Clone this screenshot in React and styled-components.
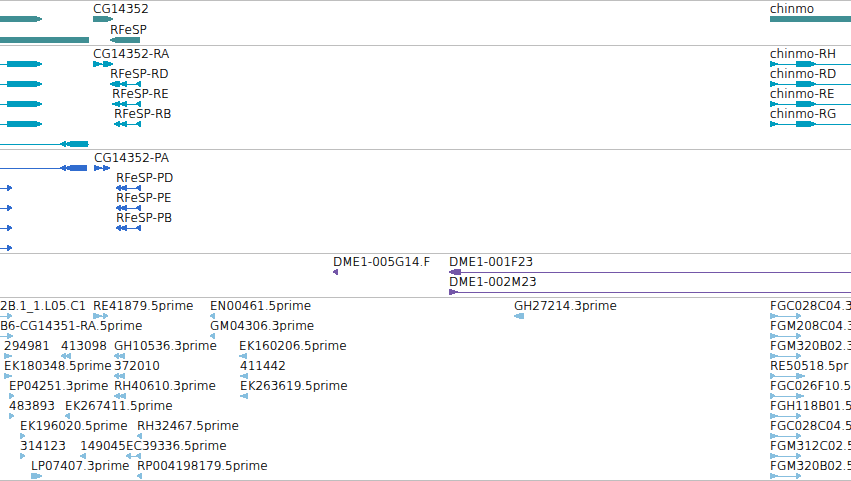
import React, { Component } from 'react'
import styled, { createGlobalStyle } from 'styled-components'


const FAR = 4000

const GlobalStyle = createGlobalStyle`
    body {
        background-color: #ffffff;
        margin: 0;
        overflow: hidden;
    }
`;

const Browser = styled.main`
    border-bottom: 1px solid #bebebe;
    color: #000000;
    display: flex;
    flex-direction: column;
    font-family: 'DejaVu Sans', sans-serif;
    font-size: 12px;
    font-weight: 200;
    line-height: 14px;
`;

const Track = styled.section`
    border-top: 1px solid #bebebe;
    color: ${props => props.$color};
    display: flex;
    flex-direction: column;
    gap: ${props => props.$gap || 0}px;
    padding: 1px 0 2px;

    &:last-child {
        padding-bottom: 1px;
    }
`;

const Lane = styled.div`
    height: 20px;
    overflow-x: clip;
    position: relative;
`;

// features sit on the lane at their place in the sequence
const FeatureBox = styled.div`
    display: flex;
    flex-direction: column;
    position: absolute;
    top: 0;
`;

const Label = styled.span`
    color: #000000;
    height: 14px;
    text-shadow: 0 0 0 #000000;
    white-space: nowrap;
`;

const Glyph = styled.svg`
    display: block;
    fill: currentColor;
    height: 6px;
    shape-rendering: crispEdges;
`;


// block: [start, end, strand], strand is 1, -1 or 0 for no arrow head
const blockPoints = ([start, end, strand], offset) => {
    const a = start - offset
    const b = end - offset
    const head = b - a > 9 ? 7 : b - a
    if (strand === 1) {
        return `${a},0 ${b - head + 1},0 ${b},2.4 ${b},3.6 ${b - head + 1},6 ${a},6`
    }
    if (strand === -1) {
        return `${b},0 ${a + head - 1},0 ${a},2.4 ${a},3.6 ${a + head - 1},6 ${b},6`
    }
    return `${a},0 ${b},0 ${b},6 ${a},6`
}

const Feature = ({ name, blocks, line }) => {
    const ends = blocks.concat(line ? [line] : [])
    const start = Math.min(...ends.map(e => e[0]))
    const width = Math.max(...ends.map(e => e[1])) - start
    return (
        <FeatureBox style={{ left: start }}>
            <Label>{name}</Label>
            <Glyph width={width} aria-hidden="true">
                {line && <rect x={line[0] - start} y="3" width={line[1] - line[0]} height="1" />}
                {blocks.map(block => (
                    <polygon key={block[0]} points={blockPoints(block, start)} />
                ))}
            </Glyph>
        </FeatureBox>
    )
}


const f = (name, blocks, line) => ({ name, blocks, line })

const leftExon = f('', [[7, 42, 1]], [0, 8])
const leftCds = f('', [[7, 12, 1]], [0, 8])
const rfesp = (name, start) => f(name, [[start, 120, -1], [119, 127, -1], [136, 141, -1]], [start, 141])
const rfespCds = name => f(name, [[116, 121, -1], [120, 127, -1], [136, 141, -1]], [116, 141])
const chinmo = name => f(name, [[770, 778, 1], [796, 816, 1]], [770, FAR])
const chinmoEst = (name, first = 778, last = 801) => f(name, [[770, first, 1], [796, last, 1]], [770, last])

const tracks = [
    {
        id: 'genes',
        color: '#408f94',
        gap: 1,
        lanes: [
            [f('', [[0, 42, 1]]), f('CG14352', [[93, 113, 1]]), f('chinmo', [[770, FAR, 0]])],
            [f('', [[0, 89, 0]]), f('RFeSP', [[110, 140, -1]])],
        ],
    },
    {
        id: 'transcripts',
        color: '#009dbf',
        lanes: [
            [leftExon, f('CG14352-RA', [[93, 102, 1], [103, 113, 1]], [93, 113]), chinmo('chinmo-RH')],
            [leftExon, rfesp('RFeSP-RD', 110), chinmo('chinmo-RD')],
            [leftExon, rfesp('RFeSP-RE', 112), chinmo('chinmo-RE')],
            [leftExon, rfesp('RFeSP-RB', 114), chinmo('chinmo-RG')],
            [f('', [[60, 66, -1], [65, 88, -1]], [0, 89])],
        ],
    },
    {
        id: 'proteins',
        color: '#306ccf',
        lanes: [
            [f('', [[60, 66, -1], [65, 87, -1]], [0, 87]), f('CG14352-PA', [[94, 102, 1], [103, 110, 1]], [94, 110])],
            [leftCds, rfespCds('RFeSP-PD')],
            [leftCds, rfespCds('RFeSP-PE')],
            [leftCds, rfespCds('RFeSP-PB')],
            [leftCds],
        ],
    },
    {
        id: 'clones',
        color: '#7457a8',
        lanes: [
            [f('DME1-005G14.F', [[333, 338, -1]]), f('DME1-001F23', [[449, 461, -1]], [449, FAR])],
            [f('DME1-002M23', [[449, 458, 1]], [449, FAR])],
        ],
    },
    {
        id: 'ests',
        color: '#87bfdf',
        lanes: [
            [
                f('2B.1_1.L05.C1', [[7, 12, 1]], [0, 8]),
                f('RE41879.5prime', [[93, 102, 1], [103, 108, 1]], [93, 108]),
                f('EN00461.5prime', [[210, 215, -1]]),
                f('GH27214.3prime', [[514, 524, -1]]),
                chinmoEst('FGC028C04.3'),
            ],
            [
                f('B6-CG14351-RA.5prime', [[7, 13, 1]], [0, 8]),
                f('GM04306.3prime', [[210, 215, -1]]),
                chinmoEst('FGM208C04.3'),
            ],
            [
                f('294981', [[4, 12, 1]]),
                f('413098', [[61, 66, -1], [65, 71, -1]]),
                f('GH10536.3prime', [[114, 119, -1], [118, 125, -1]]),
                f('EK160206.5prime', [[239, 247, -1]]),
                chinmoEst('FGM320B02.3'),
            ],
            [
                f('EK180348.5prime', [[4, 12, 1]]),
                f('372010', [[114, 119, -1], [118, 125, -1]]),
                f('411442', [[240, 248, -1]]),
                chinmoEst('RE50518.5pr', 775, 805),
            ],
            [
                f('EP04251.3prime', [[9, 14, 1]]),
                f('RH40610.3prime', [[114, 120, -1], [119, 126, -1]]),
                f('EK263619.5prime', [[240, 248, -1]]),
                chinmoEst('FGC026F10.5', 775, 804),
            ],
            [
                f('483893', [[9, 14, 1]]),
                f('EK267411.5prime', [[65, 70, -1]]),
                chinmoEst('FGH118B01.5'),
            ],
            [
                f('EK196020.5prime', [[20, 25, 1]]),
                f('RH32467.5prime', [[137, 142, -1]]),
                chinmoEst('FGC028C04.5'),
            ],
            [
                f('314123', [[20, 25, 1]]),
                f('149045', [[80, 86, -1]]),
                f('EC39336.5prime', [[126, 131, -1], [136, 141, -1]], [126, 141]),
                chinmoEst('FGM312C02.5'),
            ],
            [
                f('LP07407.3prime', [[31, 42, 1]]),
                f('RP004198179.5prime', [[137, 142, -1]]),
                chinmoEst('FGM320B02.5'),
            ],
        ],
    },
]


class App extends Component {
    render() {
        return (
            <>
                <GlobalStyle />
                <Browser>
                    <div>
                        {tracks.map(track => (
                            <Track key={track.id} $color={track.color} $gap={track.gap}>
                                {track.lanes.map((lane, i) => (
                                    <Lane key={i}>
                                        {lane.map((feature, j) => <Feature key={j} {...feature} />)}
                                    </Lane>
                                ))}
                            </Track>
                        ))}
                    </div>
                </Browser>
            </>
        )
    }
}

export default App
